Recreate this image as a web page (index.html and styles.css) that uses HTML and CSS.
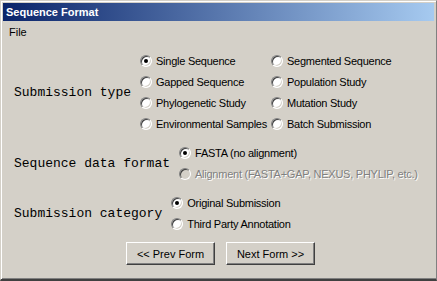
FILE: index.html
```html
<!DOCTYPE html>
<html lang="en">
<head>
    <meta charset="UTF-8">
    <title>Sequence Format</title>
    <link rel="stylesheet" href="styles.css">
</head>
<body>
    <div class="window">
        <div class="titlebar">Sequence Format</div>
        <div class="menubar"><span class="menu-item">File</span></div>

        <div class="content">
            <!-- Submission type -->
            <div class="section">
                <div class="label">Submission type</div>
                <div class="options grid-2">
                    <label class="radio checked"><span class="dot"></span>Single Sequence</label>
                    <label class="radio"><span class="dot"></span>Segmented Sequence</label>
                    <label class="radio"><span class="dot"></span>Gapped Sequence</label>
                    <label class="radio"><span class="dot"></span>Population Study</label>
                    <label class="radio"><span class="dot"></span>Phylogenetic Study</label>
                    <label class="radio"><span class="dot"></span>Mutation Study</label>
                    <label class="radio"><span class="dot"></span>Environmental Samples</label>
                    <label class="radio"><span class="dot"></span>Batch Submission</label>
                </div>
            </div>

            <!-- Sequence data format -->
            <div class="section">
                <div class="label">Sequence data format</div>
                <div class="options">
                    <label class="radio checked"><span class="dot"></span>FASTA (no alignment)</label>
                    <label class="radio disabled"><span class="dot"></span>Alignment (FASTA+GAP, NEXUS, PHYLIP, etc.)</label>
                </div>
            </div>

            <!-- Submission category -->
            <div class="section">
                <div class="label">Submission category</div>
                <div class="options">
                    <label class="radio checked"><span class="dot"></span>Original Submission</label>
                    <label class="radio"><span class="dot"></span>Third Party Annotation</label>
                </div>
            </div>

            <div class="buttons">
                <button type="button">&lt;&lt; Prev Form</button>
                <button type="button">Next Form &gt;&gt;</button>
            </div>
        </div>
    </div>
</body>
</html>
```

FILE: styles.css
```css
body {
    margin: 0;
    background-color: #d4d0c8;
    font-family: "Liberation Sans", Arial, sans-serif;
    font-size: 11px;
}
.window {
    width: 437px;
    height: 281px;
    box-sizing: border-box;
    padding: 1px 1px 0 1px;
    border-top: 1px solid #d4d0c8;
    border-left: 1px solid #d4d0c8;
    border-bottom: 2px solid #404040;
    border-right: 1px solid #808080;
    box-shadow: inset 1px 1px #ffffff, inset 0 -1px #808080;
    background-color: #d4d0c8;
    overflow: hidden;
}
.titlebar {
    height: 18px;
    margin: 1px 1px 0 1px;
    padding-left: 3px;
    line-height: 18px;
    color: #ffffff;
    font-weight: bold;
    background: linear-gradient(to right, #0a246a, #a6caf0);
}
.menubar {
    height: 17px;
    padding-top: 2px;
    line-height: 19px;
    padding-left: 7px;
}
.content {
    padding: 10px 0 0 12px;
}
.section {
    display: flex;
    align-items: center;
    gap: 9px;
    margin-bottom: 8px;
}
.label {
    font-family: "Liberation Mono", "Courier New", monospace;
    font-size: 13px;
    white-space: nowrap;
}
.options {
    display: flex;
    flex-direction: column;
    letter-spacing: -0.25px;
}
.grid-2 {
    display: grid;
    grid-template-columns: 131px auto;
}
.radio {
    display: flex;
    align-items: center;
    height: 21px;
    white-space: nowrap;
}
.dot {
    position: relative;
    flex-shrink: 0;
    width: 12px;
    height: 12px;
    box-sizing: border-box;
    margin-right: 4px;
    border-radius: 50%;
    border: 1px solid;
    border-color: #808080 #ffffff #ffffff #808080;
    background-color: #ffffff;
    box-shadow: inset 1px 1px #404040, inset -1px -1px #d4d0c8;
}
.checked .dot::after {
    content: "";
    position: absolute;
    left: 3px;
    top: 3px;
    width: 4px;
    height: 4px;
    border-radius: 50%;
    background-color: #000000;
}
.disabled {
    color: #808080;
    text-shadow: 1px 1px #ffffff;
}
.disabled .dot {
    background-color: #d4d0c8;
}
.buttons {
    display: flex;
    gap: 11px;
    padding-left: 112px;
    margin-top: 8px;
}
button {
    width: 89px;
    height: 23px;
    font-family: "Liberation Sans", Arial, sans-serif;
    font-size: 11px;
    color: #000000;
    background-color: #d4d0c8;
    border: 1px solid;
    border-color: #ffffff #404040 #404040 #ffffff;
    box-shadow: inset -1px -1px #808080;
    padding: 0;
}
```
